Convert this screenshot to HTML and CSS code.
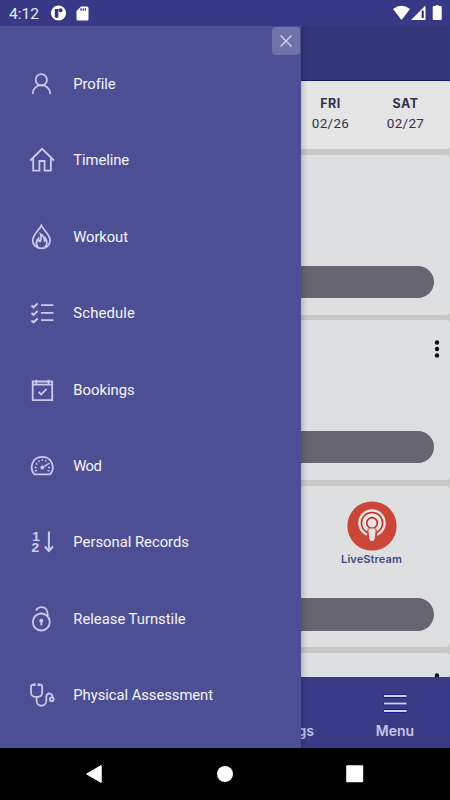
FILE: index.html
```html
<!DOCTYPE html>
<html lang="en">
<head>
<meta charset="utf-8">
<title>Menu</title>
<link rel="stylesheet" href="styles.css">
</head>
<body>
<div class="phone">
  <header class="status">
    <span class="clock">4:12</span>
    <svg class="status-left" width="42" height="18" viewBox="0 0 42 18">
      <circle cx="8.500" cy="9" r="7.600" fill="#fff"/>
      <path d="M4.800 5h3.600v7.200a1.800 1.800 0 0 1-3.600 0z" fill="#373886"/>
      <circle cx="10.600" cy="6.300" r="2" fill="#373886"/>
      <path d="M31 2.500h6q1.500 0 1.500 1.500v11q0 1.500-1.500 1.500h-9q-1.500 0-1.500-1.500V7z" fill="#fff"/>
      <path d="M31 4.300v2.500M33.200 4.300v2.500M35.400 4.300v2.500" stroke="#373886" stroke-width="1.300"/>
    </svg>
    <svg class="status-right" width="52" height="18" viewBox="0 0 52 18">
      <path d="M1 5Q9.500-1.500 18 5L9.500 16z" fill="#fff"/>
      <path d="M33.500 1.500v14.500H19z" fill="#fff"/>
      <path d="M30.700 6.500v7.500" stroke="#20227b" stroke-width="2"/>
      <path d="M41.700 2h2V1.200h3V2h2q1 0 1 1v12q0 1-1 1H41.700q-1 0-1-1V3q0-1 1-1z" fill="#fff"/>
    </svg>
  </header>

  <main class="screen">
    <div class="topbar"></div>
    <div class="feed">
      <section class="dates">
        <div class="day"><b>FRI</b><span>02/26</span></div>
        <div class="day"><b>SAT</b><span>02/27</span></div>
      </section>
      <section class="card card-a"><div class="pill"></div></section>
      <section class="card card-b">
        <svg class="dots" width="6" height="20" viewBox="0 0 6 20"><g fill="#111"><circle cx="3" cy="3.500" r="2.200"/><circle cx="3" cy="10" r="2.200"/><circle cx="3" cy="16.500" r="2.200"/></g></svg>
        <div class="pill"></div>
      </section>
      <section class="card card-c">
        <div class="live">
          <svg width="50" height="50" viewBox="0 0 50 50">
            <circle cx="25" cy="25" r="24.600" fill="#c94639"/>
            <circle cx="25" cy="22" r="13.800" fill="#e8e4e4"/>
            <circle cx="25" cy="22" r="10.600" fill="none" stroke="#c72b22" stroke-width="1.500"/>
            <circle cx="25" cy="22" r="5.300" fill="#e8e4e4" stroke="#c72b22" stroke-width="1.700"/>
            <path d="M19.500 37l1-9q4.500-2.500 9 0l1 9z" fill="#c94639"/>
            <path d="M21.400 29.500q0-2 2-2h3.200q2 0 2 2l-.9 8q-.3 2.500-2.700 2.500t-2.700-2.500z" fill="#e8e4e4"/>
          </svg>
          <strong>LiveStream</strong>
        </div>
        <div class="pill"></div>
      </section>
      <section class="card card-d">
        <svg class="dots" width="6" height="20" viewBox="0 0 6 20"><g fill="#111"><circle cx="3" cy="3.500" r="2.200"/><circle cx="3" cy="10" r="2.200"/></g></svg>
      </section>
    </div>
    <nav class="tabs">
      <div class="tab tab-bookings"><span>Bookings</span></div>
      <div class="tab tab-menu">
        <svg width="24" height="20" viewBox="0 0 24 20"><path d="M.5 3h23M.5 10.500h23M.5 18h23" stroke="#161685" stroke-width="3.500"/><path d="M1 3h22.500M1 10.500h22.500M1 18h22.500" stroke="#d2cff0" stroke-width="2"/></svg>
        <span>Menu</span>
      </div>
    </nav>

    <aside class="drawer">
      <button class="close" aria-label="Close"><svg width="14" height="14" viewBox="0 0 14 14"><path d="M1.500 1.500l11 11M12.500 1.500l-11 11"/></svg></button>
      <ul class="menu">
        <li><svg viewBox="0 0 28 28"><circle cx="13.300" cy="9.800" r="5.700"/><path d="M4.700 24v-.6a8.700 8.200 0 0 1 17.400 0v.6"/></svg><span class="profile">Profile</span></li>
        <li><svg viewBox="0 0 28 28"><path d="M5.200 12.500V24.700h6.200V15h5.200v9.700h6.300V12.500M2.200 14.500L14.100 2.800L26 14.500"/></svg><span class="timeline">Timeline</span></li>
        <li><svg viewBox="0 0 28 28"><path d="M13.300 2.500C11.500 7 4.700 11.500 4.700 17.500a8.700 7.900 0 0 0 17.400 0C22.100 11.500 15.500 7.500 13.300 2.500z"/><path d="M10.300 24.500C7.500 21 8.500 17.500 10.500 15.500c0 2 .7 2.800 1.500 3c1.700-2.500 1.300-5 .5-7.500c2.800 1.500 4 4 4.200 7c.8-.5 1-1.200 1-2.200c2 3.200 1.200 6.700-1 8.500"/></svg><span class="workout">Workout</span></li>
        <li><svg viewBox="0 0 28 28"><path d="M3.500 6.400l2 1.900L9.700 4.500M3.500 14l2 1.900l4.200-3.800M3.500 21.400l2 1.900l4.200-3.800" stroke-width="2"/><path d="M13 6.200h12.500M13 13.900h12.500M13 21.200h12.500"/></svg><span class="schedule">Schedule</span></li>
        <li><svg viewBox="0 0 28 28"><path d="M4.700 5.500h19.500v18.700H4.700zM4.700 8.600h19.500M8.300 3.700v4M20.500 3.700v4M10.500 15.800l2.700 2.700l5.300-5.500"/></svg><span class="bookings">Bookings</span></li>
        <li><svg viewBox="0 0 28 28"><path d="M6.500 22.300C1.500 17.500 3 4.800 14.200 4.800S27 17.500 22 22.300z"/><path d="M6.600 15.500h2M20 15.500h2M7.800 11.500l1.600.8M10.500 8.500l1 1.400M14.300 7.300v1.700M18.200 8.300l-1 1.400M7 19l2-.6M21.500 19l-2-.6M14.500 15.500l7-4.300" stroke-width="1.400"/><circle cx="14.300" cy="15.500" r="1.900" fill="#ccc8ee" stroke="none"/></svg><span class="wod">Wod</span></li>
        <li><svg viewBox="0 0 28 28"><g class="numbers"><text transform="translate(4 12.500) scale(1.200 1)">1</text><text transform="translate(3.200 24) scale(1.200 1)">2</text></g><path d="M20.900 3.500v19M16.800 18.500l4.100 4.500l4.100-4.500" stroke-width="2"/></svg><span class="records">Personal Records</span></li>
        <li><svg viewBox="0 0 28 28"><circle cx="13.300" cy="17" r="8.500"/><path d="M8 5.500C10 1.500 15.500 1.200 18 4c1.600 1.700 1.700 4 1.700 7"/><circle cx="13.300" cy="15.800" r="2" fill="#ccc8ee" stroke="none"/><path d="M13.300 16v4.500" stroke-width="1.800"/></svg><span class="release">Release Turnstile</span></li>
        <li><svg viewBox="0 0 28 28"><path d="M7 3.700H5Q3 3.700 3 6v5c0 4.300 2.200 5 5.700 5s5.500-1 5.500-5V6q0-2.300-2-2.300h-2M8.600 16v3.500c0 7 9.700 7 9.700 0v-3.300c0-5.500 7.200-4.500 6.200.8"/><path d="M6.500 2.500v2.600M10.700 2.500v2.600" stroke-width="2.400"/><circle cx="23.800" cy="18.200" r="1.900"/></svg><span class="physical">Physical Assessment</span></li>
      </ul>
    </aside>
  </main>

  <footer class="navbar">
    <svg width="18" height="20" viewBox="0 0 18 20"><path d="M15.200 1.500v17L.6 10z" fill="#fff" stroke="#fff" stroke-linejoin="round"/></svg>
    <svg width="18" height="20" viewBox="0 0 18 20"><circle cx="9" cy="10" r="8" fill="#fff"/></svg>
    <svg width="18" height="20" viewBox="0 0 18 20"><rect x=".2" y="1.200" width="17" height="17" rx="1" fill="#fff"/></svg>
  </footer>
</div>
</body>
</html>
```
FILE: styles.css
```css
* { box-sizing: border-box; }
body { margin: 0; font-family: Roboto, "Liberation Sans", sans-serif; }
svg { display: block; flex: none; }

.phone {
  width: 450px;
  height: 800px;
  display: grid;
  grid-template-rows: 26px 722px 52px;
  overflow: hidden;
  background: #000;
}

.status {
  display: flex;
  align-items: center;
  padding: 0 6px 0 9px;
  background: #373986;
  color: #e9e8f4;
}
.clock { width: 41px; padding-top: 1px; font-size: 15.500px; white-space: nowrap; }
.status-right { margin-left: auto; }

.screen {
  position: relative;
  display: grid;
  grid-template-rows: 55px 596px 71px;
  overflow: hidden;
}
.topbar { background: #333677; border-bottom: 1px solid #1b1d70; }

.feed {
  display: grid;
  grid-template-rows: 68px 160px 159.500px 161.500px 24px;
  row-gap: 5.700px;
  overflow: hidden;
  background: #c8c8c8;
}
.dates {
  display: grid;
  grid-template-columns: 75px 75px;
  justify-content: end;
  padding: 13px 7px 0 0;
  border-radius: 3px;
  background: #e5e5e5;
}
.day {
  display: flex;
  flex-direction: column;
  align-items: center;
  color: #30334f;
  font-size: 13.500px;
  line-height: 19.500px;
}
.day b { font-family: Inter, sans-serif; font-size: 12.500px; font-weight: 700; letter-spacing: .4px; }
.day span { letter-spacing: .3px; }

.card {
  display: flex;
  flex-direction: column;
  align-items: flex-end;
  justify-content: flex-end;
  padding-right: 16px;
  border-radius: 4px;
  background: #dedfe1;
}
.pill {
  width: 400px;
  height: 32.500px;
  margin-bottom: 16.400px;
  border-radius: 17px;
  background: #666570;
  flex: none;
}
.dots { margin: 19px -5.500px auto 0; }
.live {
  width: 80px;
  margin: 15.700px 22.500px auto 0;
  display: flex;
  flex-direction: column;
  align-items: center;
}
.live strong {
  padding-top: 1px;
  font-family: Inter, sans-serif;
  font-size: 11px;
  font-weight: 600;
  letter-spacing: .1px;
  line-height: 15px;
  color: #424b80;
}
.card-d { justify-content: flex-start; }

.tabs {
  display: grid;
  grid-template-columns: 1fr 110px;
  background: #393b87;
  color: #c7c5e4;
  font-family: Inter, sans-serif;
  font-size: 14px;
  font-weight: 600;
  line-height: 18px;
}
.tab { display: flex; flex-direction: column; }
.tab-bookings { align-items: flex-end; padding: 45px 26px 0 0; }
.tab-menu { align-items: center; padding-top: 16px; }
.tab-menu span { margin-top: 9px; }

.drawer {
  position: absolute;
  top: 0;
  left: 0;
  width: 301px;
  height: 722px;
  background: #4d4f94;
  box-shadow: 0 0 7px rgba(0, 0, 0, .35);
}
.close {
  display: flex;
  align-items: center;
  justify-content: center;
  width: 28px;
  height: 28px;
  margin: 1px 1px 0 auto;
  padding: 0;
  border: 0;
  border-radius: 4px;
  background: #7172aa;
}
.close path { fill: none; stroke: #d9d6f0; stroke-width: 1.200; }

.menu { list-style: none; margin: -9.200px 0 0; padding: 0; }
.menu li {
  display: flex;
  align-items: center;
  height: 76.400px;
  padding-left: 28px;
  gap: 17.300px;
  color: #f5f4fc;
  font-size: 14.800px;
  white-space: nowrap;
}
.menu svg {
  width: 28px;
  height: 28px;
  fill: none;
  stroke: #ccc8ee;
  stroke-width: 1.800;
}
.menu .schedule { letter-spacing: .15px; }
.menu .profile, .menu .timeline, .menu .workout { letter-spacing: -.1px; }
.menu .wod { letter-spacing: -.6px; }
.menu .physical { letter-spacing: -.05px; }
.menu .numbers {
  fill: #ccc8ee;
  stroke: none;
  font: 700 12px "Liberation Sans", sans-serif;
}

.navbar {
  display: grid;
  grid-template-columns: 18px 18px 18px;
  column-gap: 112px;
  justify-content: center;
  align-items: center;
  background: #000;
}
```
